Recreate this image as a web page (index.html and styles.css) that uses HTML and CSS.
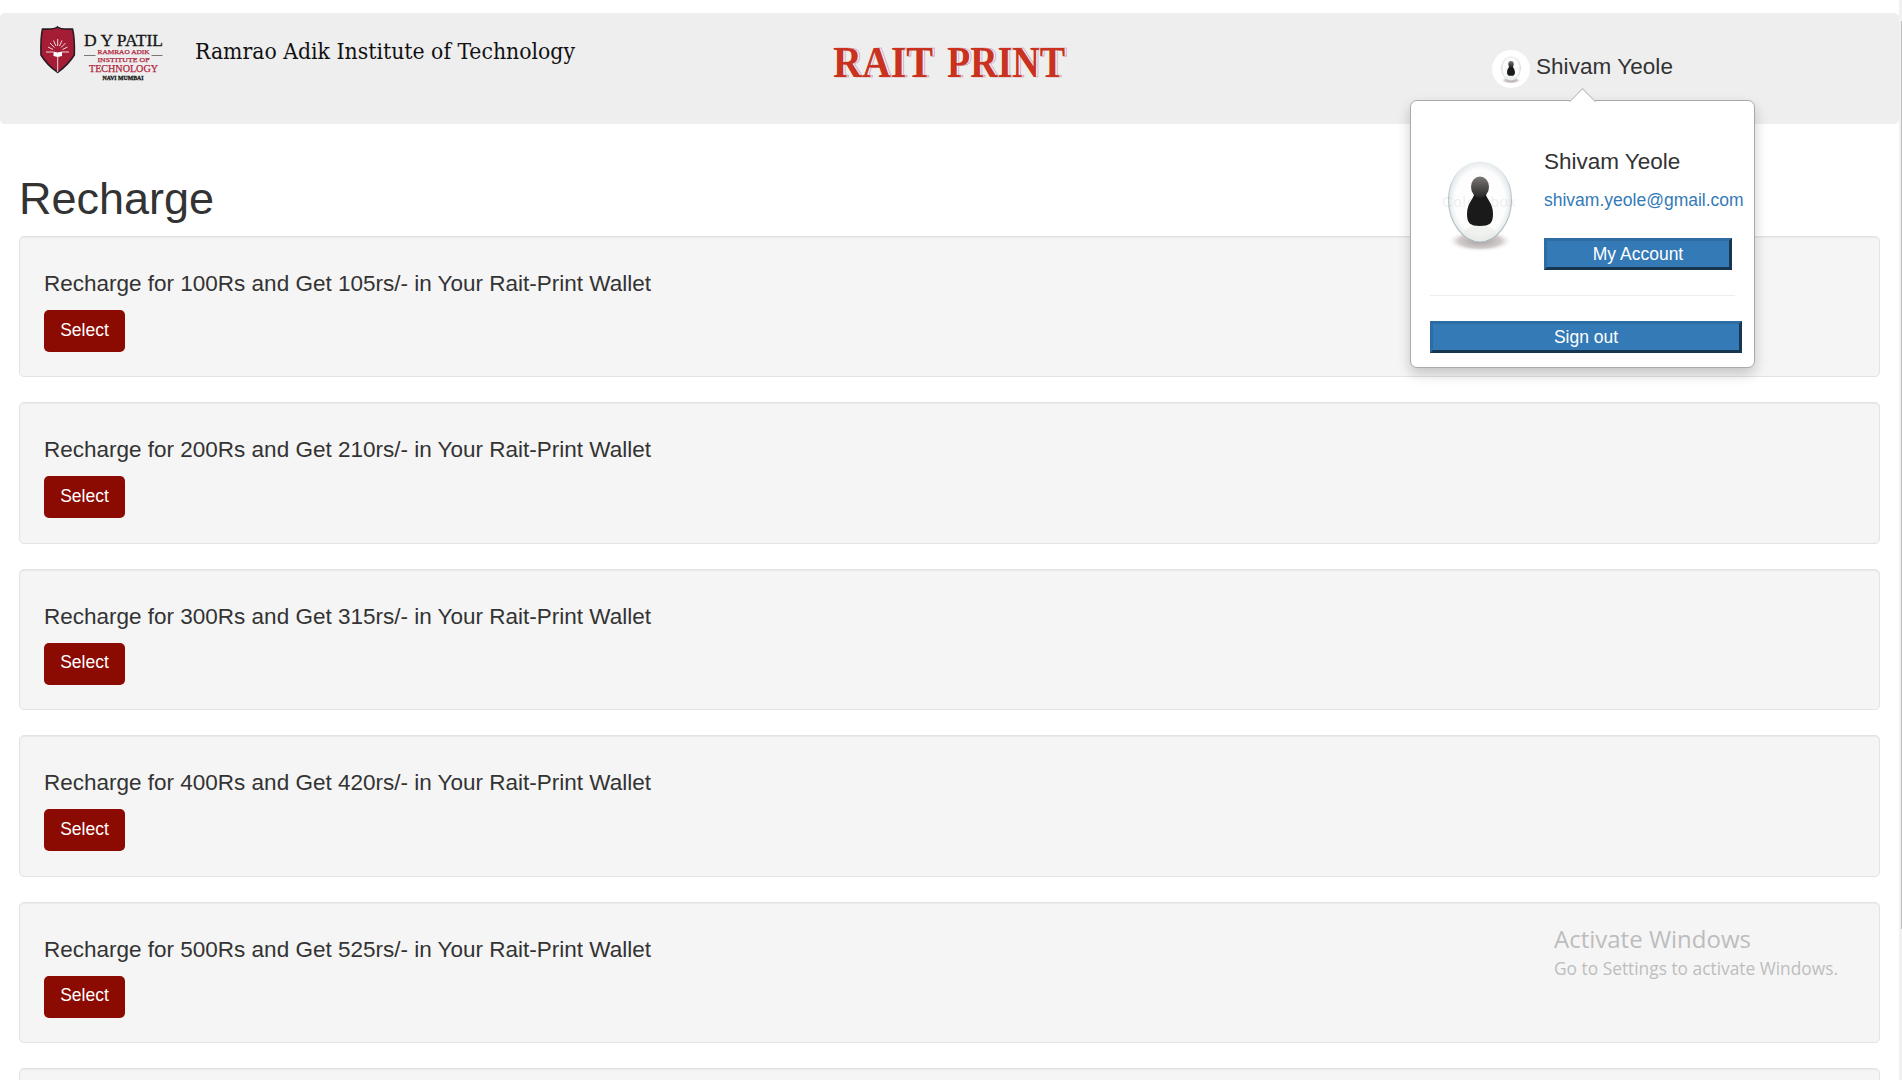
FILE: index.html
```html
<!DOCTYPE html>
<html lang="en">
<head>
<meta charset="utf-8">
<title>RAIT Print</title>
<link rel="stylesheet" href="styles.css">
</head>
<body>
<svg class="defs" width="0" height="0" aria-hidden="true">
  <defs>
    <linearGradient id="head-fill" x1="0" y1="0" x2="0" y2="1"><stop offset="0" stop-color="#7c7777"/><stop offset="1" stop-color="#282626"/></linearGradient>
    <linearGradient id="egg-edge" x1="0" y1="0" x2="0" y2="1"><stop offset="0" stop-color="#fff"/><stop offset=".3" stop-color="#c3cdd2"/><stop offset="1" stop-color="#b0bab8"/></linearGradient>
    <radialGradient id="egg-fill" cx=".5" cy=".5" r=".55"><stop offset="0" stop-color="#fff"/><stop offset=".72" stop-color="#fdfdfd"/><stop offset="1" stop-color="#d6dfe3"/></radialGradient>
    <radialGradient id="floor"><stop offset="0" stop-color="#a8a0a0"/><stop offset=".65" stop-color="#d2cccc"/><stop offset="1" stop-color="#fff" stop-opacity="0"/></radialGradient>
    <symbol id="egg" viewBox="0 0 76 96">
      <ellipse cx="38" cy="84" rx="33" ry="11" fill="url(#floor)"/>
      <path d="M38 4C56 4 69.500 22 69.500 43C69.500 66 54 85 38 85S6.500 66 6.500 43C6.500 22 20 4 38 4Z" fill="url(#egg-fill)" stroke="url(#egg-edge)" stroke-width="1.200"/>
      <ellipse cx="38" cy="76" rx="16" ry="7" fill="#e8ebe6" opacity=".6"/>
      <text class="mark" x="0" y="50" textLength="74">Colourbox</text>
      <path d="M33 34H43C43 41 51 45 51 57C51 66 48 69 38 69S25 66 25 57C25 45 33 41 33 34Z" fill="#1b1a1a"/>
      <ellipse cx="38" cy="30" rx="9" ry="10.500" fill="url(#head-fill)"/>
    </symbol>
  </defs>
</svg>
<div class="page">
  <header class="navbar">
    <svg class="brand" width="560" height="70" viewBox="30 20 560 70" role="img">
      <path d="M57.500 27Q60 29.500 72.500 29Q74.800 37 74.300 55Q68 65 57.700 72.300Q47 65 41 55Q40.500 37 42.500 29Q55 29.500 57.500 27Z" fill="#a51c35" stroke="#2b1a24" stroke-width="1.600"/>
      <path d="M57.700 56V72M46 52H53M62 52H69M48 47L53 49.500M50 43L54.500 47.500M53.500 40.500L56 46M57.700 39V46M62 40.500L59.500 46M65.500 43L61 47.500M67.500 47L62.500 49.500" stroke="#efd9de" stroke-width="1" fill="none"/>
      <path d="M53.500 51.500L57.700 52.500L62 51.500V56L57.700 57L53.500 56Z" fill="#fff"/>
      <g class="logo-text">
        <text class="ink" x="84" y="45.500" font-size="16.500" textLength="79" lengthAdjust="spacingAndGlyphs">D Y PATIL</text>
        <text class="crimson" x="97.500" y="53.500" font-size="6.800" textLength="52" lengthAdjust="spacingAndGlyphs">RAMRAO ADIK</text>
        <text class="crimson" x="97.500" y="62" font-size="6.800" textLength="52" lengthAdjust="spacingAndGlyphs">INSTITUTE OF</text>
        <text class="crimson" x="89" y="72" font-size="10.500" textLength="69" lengthAdjust="spacingAndGlyphs">TECHNOLOGY</text>
        <text class="ink bold" x="102.500" y="80" font-size="6" textLength="41" lengthAdjust="spacingAndGlyphs">NAVI MUMBAI</text>
      </g>
      <path d="M84 55.500H95.500M151.500 55.500H162.500" stroke="#777"/>
      <text class="institute" x="195" y="58.500" textLength="380" lengthAdjust="spacingAndGlyphs">Ramrao Adik Institute of Technology</text>
    </svg>
    <svg class="title" width="260" height="60" viewBox="820 33 260 60" role="img">
      <g class="title-echo">
        <text x="835" y="77" textLength="100" lengthAdjust="spacingAndGlyphs">RAIT</text>
        <text x="949" y="77" textLength="118" lengthAdjust="spacingAndGlyphs">PRINT</text>
      </g>
      <g class="title-face">
        <text x="833" y="76.500" textLength="100" lengthAdjust="spacingAndGlyphs">RAIT</text>
        <text x="947" y="76.500" textLength="118" lengthAdjust="spacingAndGlyphs">PRINT</text>
      </g>
    </svg>
    <div class="user">
      <span class="avatar"><svg width="28" height="29"><use href="#egg"/></svg></span>
      <span class="name">Shivam Yeole</span>
      <div class="menu">
        <div class="profile">
          <svg class="portrait" width="76" height="96"><use href="#egg"/></svg>
          <div class="details">
            <div class="name">Shivam Yeole</div>
            <a class="email">shivam.yeole@gmail.com</a>
            <button class="blue account">My Account</button>
          </div>
        </div>
        <hr>
        <button class="blue signout">Sign out</button>
      </div>
    </div>
  </header>
  <main>
    <h1>Recharge</h1>
    <section class="well"><h4>Recharge for 100Rs and Get 105rs/- in Your Rait-Print Wallet</h4><button class="select">Select</button></section>
    <section class="well"><h4>Recharge for 200Rs and Get 210rs/- in Your Rait-Print Wallet</h4><button class="select">Select</button></section>
    <section class="well"><h4>Recharge for 300Rs and Get 315rs/- in Your Rait-Print Wallet</h4><button class="select">Select</button></section>
    <section class="well"><h4>Recharge for 400Rs and Get 420rs/- in Your Rait-Print Wallet</h4><button class="select">Select</button></section>
    <section class="well"><h4>Recharge for 500Rs and Get 525rs/- in Your Rait-Print Wallet</h4><button class="select">Select</button></section>
    <section class="well"></section>
  </main>
</div>
<div class="scrollbar"><div class="thumb"></div></div>
<svg class="watermark" width="300" height="60">
  <text x="0" y="29" font-size="24.500" textLength="197" lengthAdjust="spacingAndGlyphs">Activate Windows</text>
  <text x="0" y="56" font-size="17.800" textLength="284" lengthAdjust="spacingAndGlyphs">Go to Settings to activate Windows.</text>
</svg>
</body>
</html>
```
FILE: styles.css
```css
* { box-sizing: border-box; }
html { height: 1080px; overflow: hidden; }
body {
  margin: 0;
  height: 1080px;
  overflow: hidden;
  display: flex;
  background: #fff;
  color: #333;
  font: 17.5px/25px "Liberation Sans", Arial, sans-serif;
}
.defs { position: absolute; }
.page { flex: 1; height: 1080px; padding-top: 13px; overflow: hidden; }
.navbar {
  display: flex;
  align-items: flex-start;
  height: 111px;
  padding: 7px 0 0 30px;
  background: #eee;
  border-radius: 5px;
}
.brand, .title { flex: none; display: block; }
.title { margin: 13px 0 0 230px; }
.logo-text { font-family: "Liberation Serif", serif; }
.ink { fill: #171717; stroke: #171717; stroke-width: .3px; }
.crimson { fill: #b0243c; stroke: #b0243c; stroke-width: .25px; }
.bold { font-weight: 700; }
.mark { font: 15px "Liberation Sans", sans-serif; fill: #000; opacity: .05; }
.institute { font: 22.5px "DejaVu Serif Condensed", "DejaVu Serif", serif; fill: #111; }
.title-face, .title-echo { font: bold 44px "Liberation Serif", serif; }
.title-face { fill: #c8321f; }
.title-echo { fill: none; stroke: #c98a95; stroke-width: .6px; }

.user {
  position: relative;
  display: flex;
  gap: 6px;
  margin: 30px 0 0 412px;
}
.avatar {
  width: 38px;
  height: 38px;
  border-radius: 50%;
  background: #fff;
  display: flex;
  align-items: center;
  justify-content: center;
}
.name { font-size: 22.5px; line-height: 25px; white-space: nowrap; }
.user > .name { margin-top: 4px; letter-spacing: .05px; }
.menu {
  position: absolute;
  z-index: 2;
  left: -82px;
  top: 50px;
  width: 345px;
  height: 268px;
  padding: 48px 0 0 19px;
  background: #fff;
  border: 1px solid #aaa;
  border-radius: 7px;
  box-shadow: 0 6px 13px rgba(0, 0, 0, .2);
}
.menu::before {
  content: "";
  position: absolute;
  left: 162px;
  top: -9px;
  width: 18px;
  height: 18px;
  background: #fff;
  border: solid #bbb;
  border-width: 1px 0 0 1px;
  transform: rotate(45deg);
}
.profile { display: flex; height: 146px; }
.portrait { flex: none; margin: 8px 26px 0 12px; }
.details { display: flex; flex-direction: column; }
.email { margin-top: 14px; line-height: 25px; color: #337ab7; }
.blue {
  font: 17.5px/25px "Liberation Sans", Arial, sans-serif;
  height: 32px;
  padding: 0;
  color: #fff;
  background: #337ab7;
  border: 3px solid;
  border-color: #2e6da4 #173651 #173651 #2e6da4;
}
.account { width: 188px; margin-top: 25px; }
.menu hr { width: 305px; height: 1px; margin: 0; border: 0; background: #eee; }
.signout { display: block; width: 312px; margin-top: 25px; }

main { padding: 50px 19px 0; }
h1 { margin: 0 0 12px; font-size: 45px; line-height: 50px; font-weight: 400; }
.well {
  height: 141.4px;
  margin-bottom: 25px;
  padding: 34px 24px 0;
  background: #f5f5f5;
  border: 1px solid #e3e3e3;
  border-radius: 5px;
  box-shadow: inset 0 1px 1px rgba(0, 0, 0, .05);
}
h4 { margin: 0 0 14px; font-size: 22.5px; line-height: 25px; font-weight: 400; }
.select {
  display: block;
  width: 81px;
  height: 42px;
  padding: 0 0 2px;
  border: 0;
  border-radius: 5px;
  background: #8b0a02;
  color: #fff;
  font: 17.5px/25px "Liberation Sans", Arial, sans-serif;
}
.scrollbar { width: 3px; padding: 21px 0 0 2px; background: #f1f1f1; }
.thumb { height: 908px; background: #bdbdbd; }
.watermark {
  position: absolute;
  left: 1554px;
  top: 919px;
  overflow: visible;
  font-family: "Open Sans", "Noto Sans", sans-serif;
  fill: #bdbdbd;
}
```
